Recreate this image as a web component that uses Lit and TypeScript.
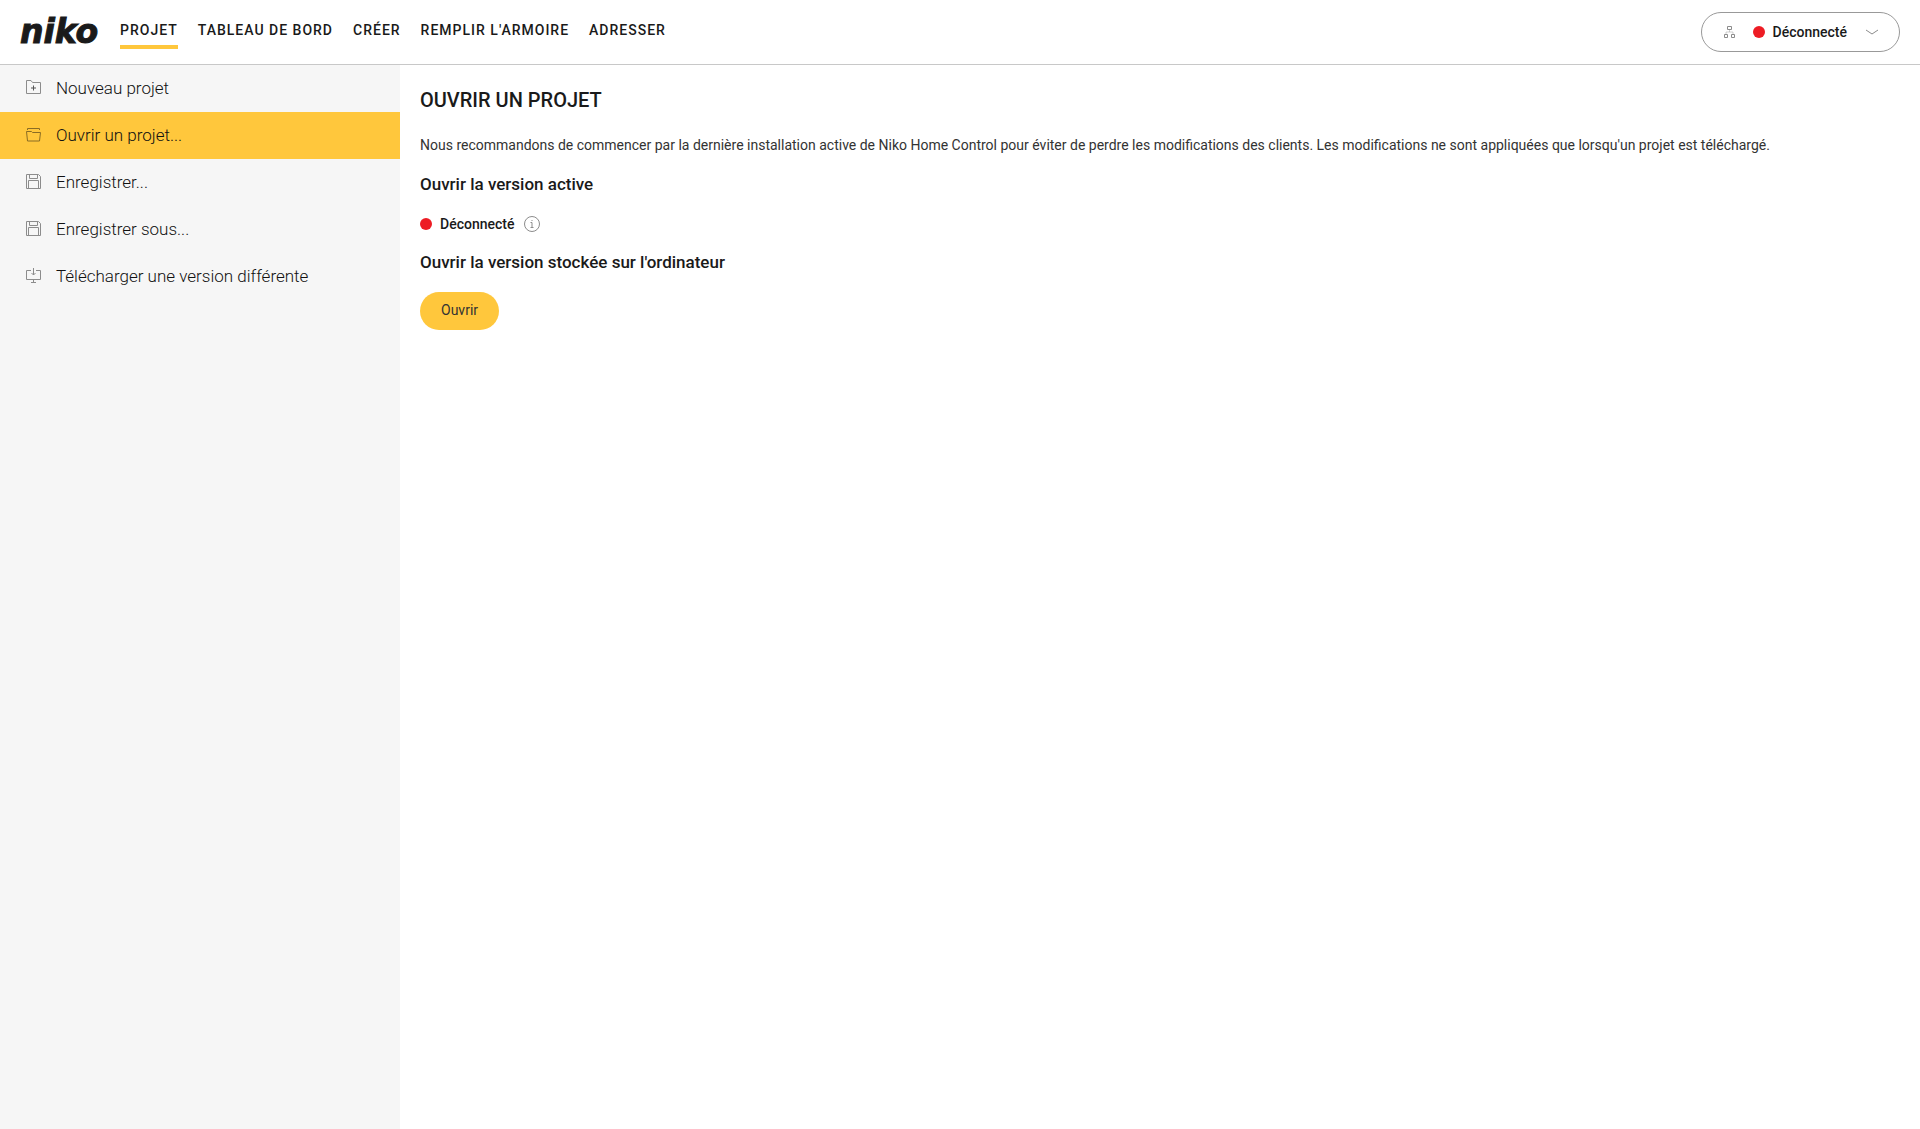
import { LitElement, html, css, svg } from "lit";
import { customElement, property } from "lit/decorators.js";
import { classMap } from "lit/directives/class-map.js";

type IconName = "new" | "open" | "save" | "download" | "network" | "chevron" | "info";

const shapes = {
  new: svg`<path d="M.5 13.5V.5h4.5l1.5 2h8v11z"/><path d="M7.5 5.5v5M5 8h5" stroke="#555"/>`,
  open: svg`<path d="M1.5 3V1.500h12V3M.5 4.500h5l1 1h8l-1 8.500h-12z"/>`,
  save: svg`<path d="M.5.5h12l2 2v12H.5zM3.5.5v4h8v-4M2.5 14.5v-8h10v8"/>`,
  download: svg`<path d="M5 2.5H.5v9h14v-9H10M7.5 0v7M5.5 5l2 2 2-2M7.5 11.5v3M5 14.5h5"/>`,
  network: svg`<path d="M3.500.5h4v3h-4zM.5 8.5h3v3h-3zM7.500 8.500h3v3h-3z"/><path d="M5.500 3.500v2.500M2 8.500V6h7v2.500" stroke-opacity=".4"/>`,
  chevron: svg`<path d="M1 1l6 4 6-4"/>`,
  info: svg`<circle cx="8" cy="8" r="7.500"/><path d="M6.500 6.500H8v5M6.500 11.500h3M8 4v1"/>`,
};

const sizes: Record<IconName, [number, number]> = {
  new: [15, 15],
  open: [15, 15],
  save: [15, 15],
  download: [15, 15],
  network: [11, 12],
  chevron: [14, 6],
  info: [16, 16],
};

const icon = (name: IconName) => {
  const [w, h] = sizes[name];
  return html`<svg class="icon" width=${w} height=${h} viewBox="0 0 ${w} ${h}" aria-hidden="true">${shapes[name]}</svg>`;
};

const shared = css`
  :host,
  * {
    box-sizing: border-box;
  }
  .icon {
    display: block;
    flex: none;
    fill: none;
    stroke: #8c8c8c;
    stroke-width: 1;
  }
`;

@customElement("connection-status")
export class ConnectionStatus extends LitElement {
  static styles = css`
    :host {
      display: inline-flex;
      align-items: center;
      gap: 8px;
      font-size: 14px;
      font-weight: 500;
      line-height: 20px;
    }
    .dot {
      width: 12px;
      height: 12px;
      border-radius: 50%;
      background: #ed1c24;
    }
  `;

  @property() label = "";

  render() {
    return html`<span class="dot"></span><span>${this.label}</span>`;
  }
}

@customElement("app-header")
export class AppHeader extends LitElement {
  static styles = [
    shared,
    css`
      :host {
        display: flex;
        align-items: center;
        height: 65px;
        padding: 0 20px;
        border-bottom: 1px solid #c8c8c8;
        background: #fff;
      }
      .logo {
        width: 80px;
        margin-right: 20px;
        color: #1a1a1a;
        font: italic bold 33px/40px "DejaVu Sans", sans-serif;
        text-decoration: none;
        -webkit-text-stroke: 1px #1a1a1a;
      }
      .nav {
        display: flex;
        gap: 20px;
        flex: 1;
      }
      .link {
        padding: 7px 0;
        border-bottom: 4px solid transparent;
        color: #1a1a1a;
        font-size: 14px;
        font-weight: 500;
        line-height: 16px;
        letter-spacing: 1px;
        text-decoration: none;
        text-transform: uppercase;
      }
      .current {
        border-color: #ffc73c;
      }
      .connection {
        display: flex;
        align-items: center;
        height: 40px;
        padding: 0 20px 0 22px;
        border: 1px solid #999;
        border-radius: 20px;
        background: #fff;
        color: #1a1a1a;
        font: inherit;
      }
      .state {
        margin: 0 18px;
      }
    `,
  ];

  private links = ["Projet", "Tableau de bord", "Créer", "Remplir l'armoire", "Adresser"];

  render() {
    return html`
      <a class="logo" href="#">niko</a>
      <nav class="nav">
        ${this.links.map(
          (label, i) => html`<a class=${classMap({ link: true, current: i === 0 })} href="#">${label}</a>`
        )}
      </nav>
      <button class="connection" type="button">
        ${icon("network")}
        <connection-status class="state" label="Déconnecté"></connection-status>
        ${icon("chevron")}
      </button>
    `;
  }
}

@customElement("project-menu")
export class ProjectMenu extends LitElement {
  static styles = [
    shared,
    css`
      :host {
        display: block;
        background: #f6f6f6;
      }
      .item {
        display: flex;
        align-items: center;
        gap: 15px;
        height: 47px;
        padding: 0 26px 2px;
        color: #111;
        font-size: 17px;
        line-height: 24px;
        text-decoration: none;
      }
      .active {
        background: #ffc73c;
      }
      .active .icon {
        stroke: #8a6c24;
      }
    `,
  ];

  private items: { icon: IconName; label: string; active?: boolean }[] = [
    { icon: "new", label: "Nouveau projet" },
    { icon: "open", label: "Ouvrir un projet...", active: true },
    { icon: "save", label: "Enregistrer..." },
    { icon: "save", label: "Enregistrer sous..." },
    { icon: "download", label: "Télécharger une version différente" },
  ];

  render() {
    return html`<nav>
      ${this.items.map(
        (item) => html`<a class=${classMap({ item: true, active: !!item.active })} href="#">
          ${icon(item.icon)}<span>${item.label}</span>
        </a>`
      )}
    </nav>`;
  }
}

@customElement("open-project")
export class OpenProject extends LitElement {
  static styles = [
    shared,
    css`
      :host {
        display: block;
        padding: 20px;
      }
      .title {
        margin: 0 0 20px;
        font-size: 20px;
        font-weight: 500;
        line-height: 30px;
        text-transform: uppercase;
      }
      .intro {
        margin: 0 0 17px;
        color: #333;
        font-size: 14px;
        font-weight: 400;
        line-height: 20px;
      }
      .heading {
        margin: 0 0 18px;
        font-size: 17px;
        font-weight: 500;
        line-height: 24px;
      }
      .status {
        display: flex;
        align-items: center;
        gap: 10px;
        margin-bottom: 16px;
      }
      .help {
        display: block;
        padding: 0;
        border: 0;
        background: none;
      }
      .open {
        height: 38px;
        padding: 0 21px 2px;
        border: 0;
        border-radius: 19px;
        background: #ffc73c;
        color: #333;
        font: inherit;
        font-size: 14px;
        font-weight: 400;
        line-height: 20px;
      }
    `,
  ];

  render() {
    return html`
      <h1 class="title">Ouvrir un projet</h1>
      <p class="intro">
        Nous recommandons de commencer par la dernière installation active de Niko Home Control pour éviter de perdre
        les modifications des clients. Les modifications ne sont appliquées que lorsqu'un projet est téléchargé.
      </p>
      <h2 class="heading">Ouvrir la version active</h2>
      <div class="status">
        <connection-status label="Déconnecté"></connection-status>
        <button class="help" type="button">${icon("info")}</button>
      </div>
      <h2 class="heading">Ouvrir la version stockée sur l'ordinateur</h2>
      <button class="open" type="button">Ouvrir</button>
    `;
  }
}

@customElement("app-root")
export class AppRoot extends LitElement {
  static styles = css`
    :host {
      display: flex;
      flex-direction: column;
      min-height: 100vh;
      background: #fff;
      color: #1a1a1a;
      font-family: Roboto, "Liberation Sans", sans-serif;
      font-weight: 300;
    }
    .body {
      display: flex;
      flex: 1;
    }
    .menu {
      flex: 0 0 400px;
    }
    .page {
      flex: 1;
      min-width: 0;
    }
  `;

  render() {
    return html`
      <app-header></app-header>
      <div class="body">
        <project-menu class="menu"></project-menu>
        <open-project class="page" role="main"></open-project>
      </div>
    `;
  }
}
